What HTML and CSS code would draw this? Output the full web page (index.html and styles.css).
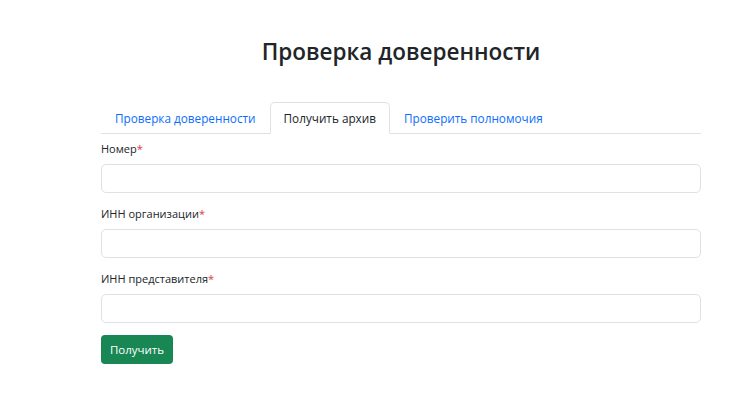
FILE: index.html
```html
<!DOCTYPE html>
<html lang="ru">
<head>
  <meta charset="UTF-8" />
  <title>Проверка доверенности</title>
  <link rel="stylesheet" href="styles.css">
</head>
<body>
  <div class="container">
    <h1 class="title">Проверка доверенности</h1>

    <ul class="nav-tabs">
      <li><a href="#" class="nav-link">Проверка доверенности</a></li>
      <li><a href="#" class="nav-link active">Получить архив</a></li>
      <li><a href="#" class="nav-link">Проверить полномочия</a></li>
    </ul>

    <form class="archive-form">
      <label for="number">Номер<span class="req">*</span></label>
      <input type="text" id="number" />

      <label for="orgInn">ИНН организации<span class="req">*</span></label>
      <input type="text" id="orgInn" />

      <label for="repInn">ИНН представителя<span class="req">*</span></label>
      <input type="text" id="repInn" />

      <button type="submit" class="submit-btn">Получить</button>
    </form>
  </div>
</body>
</html>
```

FILE: styles.css
```css
* {
  box-sizing: border-box;
}

html, body {
  margin: 0;
  padding: 0;
  font-family: "Open Sans", "Noto Sans", sans-serif;
  background: #fff;
  color: #212529;
}

.container {
  width: 600px;
  margin: 0 0 0 101px;
  padding-top: 36px;
}

.title {
  margin: 0 0 34px;
  text-align: center;
  font-size: 22.5px;
  font-weight: 600;
  line-height: 32px;
}

.nav-tabs {
  list-style: none;
  margin: 0;
  padding: 0;
  display: flex;
  border-bottom: 1px solid #dee2e6;
}

.nav-link {
  display: block;
  padding: 0 13px;
  height: 32px;
  line-height: 31px;
  font-size: 11.75px;
  color: #0d6efd;
  text-decoration: none;
  border: 1px solid transparent;
  border-radius: 5px 5px 0 0;
  margin-bottom: -1px;
}

.nav-link.active {
  color: #212529;
  background: #fff;
  border-color: #dee2e6 #dee2e6 #fff;
}

.archive-form {
  display: flex;
  flex-direction: column;
  padding-top: 6px;
}

.archive-form label {
  font-size: 11px;
  line-height: 18px;
  margin-bottom: 6px;
}

.req {
  color: #dc3545;
}

.archive-form input {
  height: 29px;
  border: 1px solid #dee2e6;
  border-radius: 5px;
  padding: 4px 10px;
  font-size: 13px;
  margin-bottom: 12px;
}

.submit-btn {
  align-self: flex-start;
  width: 72px;
  height: 29px;
  border: none;
  border-radius: 4px;
  background: #198754;
  color: #fff;
  font-family: inherit;
  font-size: 11.5px;
  cursor: pointer;
}
```
